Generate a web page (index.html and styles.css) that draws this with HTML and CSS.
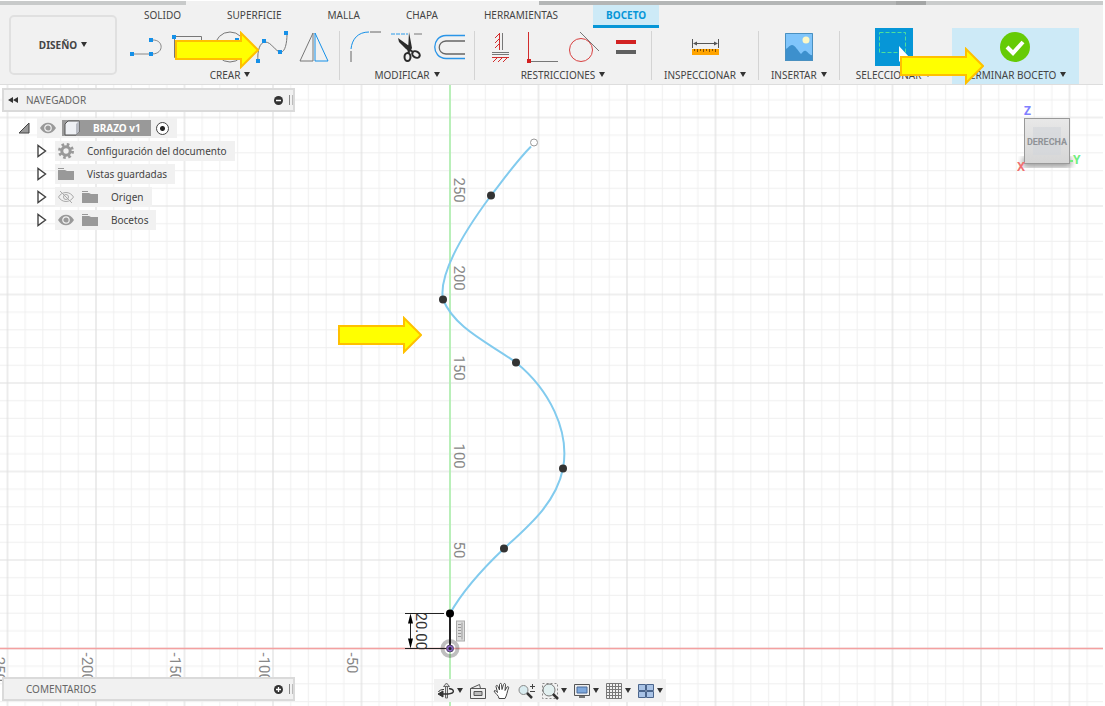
FILE: index.html
```html
<!DOCTYPE html>
<html lang="es">
<head>
    <meta charset="UTF-8">
    <meta name="viewport" content="width=device-width, initial-scale=1.0">
    <title>BRAZO v1</title>
    <link rel="stylesheet" href="styles.css">
</head>
<body>
    <div class="strip"><i class="strip-a"></i><i class="strip-b"></i><i class="strip-c"></i><i class="strip-d"></i><i class="strip-e"></i></div>

    <header class="ribbon">
        <button class="workspace caret">DISEÑO</button>

        <div class="ribbon-body">
            <nav class="tabs">
                <button class="tab">SOLIDO</button>
                <button class="tab">SUPERFICIE</button>
                <button class="tab">MALLA</button>
                <button class="tab">CHAPA</button>
                <button class="tab">HERRAMIENTAS</button>
                <button class="tab active">BOCETO</button>
            </nav>

            <div class="groups">
                <div class="group">
                    <div class="tools">
                        <button class="tool" aria-label="Línea">
                            <svg viewBox="0 0 34 34"><path d="M3 24h20c12 0 12-14 1-14" fill="none" stroke="#888"/><path d="M1 22h4v4h-4zM20 22h4v4h-4zM20 8h4v4h-4z" fill="#1590e8"/></svg>
                        </button>
                        <button class="tool" aria-label="Rectángulo">
                            <svg viewBox="0 0 34 34"><path d="M3.500 6.500h27v21h-27z" fill="none" stroke="#777"/><path d="M1 5h4v4h-4z" fill="#1590e8"/></svg>
                        </button>
                        <button class="tool" aria-label="Círculo">
                            <svg viewBox="0 0 34 34"><circle cx="17" cy="17" r="15" fill="none" stroke="#777"/><path d="M22 8h4v4h-4z" fill="#1590e8"/></svg>
                        </button>
                        <button class="tool" aria-label="Spline">
                            <svg viewBox="0 0 34 34"><path d="M3 31C2 21 5 12 10 12c7 0 10 10 16 10 4 0 6-9 6-18" fill="none" stroke="#777"/><path d="M1 29h4v4h-4zM7 9h4v4h-4zM23 20h4v4h-4zM29 1h4v4h-4z" fill="#1590e8"/></svg>
                        </button>
                        <button class="tool" aria-label="Simetría">
                            <svg viewBox="0 0 34 34" fill="none"><path d="M16 3v28H3z" stroke="#777"/><path d="M18 3v28h13z" stroke="#1590e8"/></svg>
                        </button>
                    </div>
                    <button class="group-label caret">CREAR</button>
                </div>

                <div class="group">
                    <div class="tools">
                        <button class="tool" aria-label="Empalme">
                            <svg viewBox="0 0 34 34" fill="none"><path d="M3 19C4 9 10 2 21 2" stroke="#1590e8"/><path d="M3 21v11M22 2h11" stroke="#666"/></svg>
                        </button>
                        <button class="tool" aria-label="Recortar">
                            <svg viewBox="0 0 34 34"><path d="M1 4h17" stroke="#2a9bea" stroke-dasharray="4 1"/><path d="M24 4h8" stroke="#777"/><path d="M19 2l3 16-4 3zM8 8l14 10-2 4-4-3-7-7z" fill="#2b2b2b"/><g fill="none" stroke="#2b2b2b" stroke-width="2"><ellipse cx="17.500" cy="27" rx="3" ry="4"/><ellipse cx="26" cy="24.500" rx="4" ry="3" transform="rotate(30 26 24.500)"/><path d="M18 18l1 5M20 20l3 2"/></g></svg>
                        </button>
                        <button class="tool" aria-label="Desfase">
                            <svg viewBox="0 0 34 34" fill="none"><path d="M33 5.500H14C-1 6-1 28 14 28.500h19" stroke="#2a95e8" stroke-width="1.300"/><path d="M33 11H14c-9 1-9 12 0 13h19" stroke="#666" stroke-width="1.300"/></svg>
                        </button>
                    </div>
                    <button class="group-label caret">MODIFICAR</button>
                </div>

                <div class="group">
                    <div class="tools">
                        <button class="tool" aria-label="Horizontal/Vertical">
                            <svg viewBox="0 0 34 34" fill="none"><path d="M19.500 3v17M9 22.500h17M9 24.500h17" stroke="#777"/><path d="M16.500 3v17M16 4l-4 4M16 9l-4 4M16 14l-4 4M9 27.500h17M14 28l-4 4M19 28l-4 4M24 28l-4 4" stroke="#d22c2c"/></svg>
                        </button>
                        <button class="tool" aria-label="Perpendicular">
                            <svg viewBox="0 0 34 34"><path d="M3.500 2v28" stroke="#d22c2c"/><path d="M6 31.500h27" stroke="#777"/><path d="M2 29h4v4h-4z" fill="#d22020"/></svg>
                        </button>
                        <button class="tool" aria-label="Tangente">
                            <svg viewBox="0 0 34 34" fill="none"><circle cx="14" cy="20" r="11.500" stroke="#d84040"/><path d="M13 2l19 19" stroke="#777"/></svg>
                        </button>
                        <button class="tool" aria-label="Igual">
                            <svg viewBox="0 0 34 34"><path d="M7 10h20v4H7z" fill="#d22222"/><path d="M7 20h20v4H7z" fill="#606060"/></svg>
                        </button>
                    </div>
                    <button class="group-label caret">RESTRICCIONES</button>
                </div>

                <div class="group">
                    <div class="tools">
                        <button class="tool" aria-label="Medir">
                            <svg viewBox="0 0 34 34"><path d="M4.500 9v9M30.500 9v9M6 13.500h23" stroke="#555"/><path d="M5 13.500l4-2v4zM30 13.500l-4-2v4z" fill="#555"/><path d="M4 19h27v6H4z" fill="#ffa400"/><path d="M6.500 19v2M9.500 19v3M12.500 19v2M15.500 19v3M18.500 19v2M21.500 19v3M24.500 19v2M27.500 19v3" stroke="#865000"/></svg>
                        </button>
                    </div>
                    <button class="group-label caret">INSPECCIONAR</button>
                </div>

                <div class="group">
                    <div class="tools">
                        <button class="tool" aria-label="Insertar imagen">
                            <svg viewBox="0 0 34 34"><path d="M3 3h28v28H3z" fill="#80c5fb"/><path d="M3 19c3 0 4-4 7-4s6 6 9 9c2-2 3-4 5-3s4 5 7 4v6H3z" fill="#3d90cd"/><circle cx="24" cy="10" r="3.500" fill="#fdf7c5"/><path d="M3.500 3.500h27v27h-27z" fill="none" stroke="#4a90c0"/></svg>
                        </button>
                    </div>
                    <button class="group-label caret">INSERTAR</button>
                </div>

                <div class="group last">
                    <div class="tools">
                        <button class="tool selected" aria-label="Seleccionar">
                            <svg viewBox="0 0 34 34"><path d="M2.500 2.500h26v20h-26z" fill="none" stroke="#4fe09a" stroke-dasharray="4 2"/><path d="M22 16v16l4-4h7z" fill="#fff"/></svg>
                        </button>
                    </div>
                    <button class="group-label caret">SELECCIONAR</button>
                </div>

                <div class="group finish">
                    <div class="tools">
                        <button class="tool" aria-label="Aceptar">
                            <svg viewBox="0 0 34 34"><circle cx="17" cy="17" r="15" fill="#66cb06"/><path d="M9 17l6 6 10-11" fill="none" stroke="#fff" stroke-width="4"/></svg>
                        </button>
                    </div>
                    <button class="group-label caret">TERMINAR BOCETO</button>
                </div>
            </div>
        </div>

        <svg class="arrow arrow-spline" viewBox="0 0 84 38"><path d="M1 10h65V2l17 17-17 17v-8H1z"/></svg>
        <svg class="arrow arrow-finish" viewBox="0 0 84 38"><path d="M1 10h65V2l17 17-17 17v-8H1z"/></svg>
    </header>

    <main class="canvas">
        <svg class="sketch">
            <defs>
                <pattern id="grid" width="88.500" height="88.500" patternUnits="userSpaceOnUse">
                    <path d="M17.700 0v88.500M35.400 0v88.500M53.100 0v88.500M70.800 0v88.500M0 17.700h88.500M0 35.400h88.500M0 53.100h88.500M0 70.800h88.500" stroke="#efefef"/>
                    <path d="M0 0v88.500M88.500 0v88.500M0 0h88.500M0 88.500h88.500" stroke="#e0e0e0" stroke-width="1.200"/>
                </pattern>
            </defs>
            <!-- everything is drawn relative to the sketch origin -->
            <g transform="translate(450 563.500)">
                <rect x="-2000" y="-2000" width="5000" height="4000" fill="url(#grid)"/>
                <path d="M-2000 0h5000" stroke="#f4a0a0" stroke-width="1.500"/>
                <path d="M0-2000v4000" stroke="#a8f0a8" stroke-width="1.500"/>

                <g class="ruler">
                    <text transform="translate(4 -471) rotate(90)">250</text>
                    <text transform="translate(4 -383) rotate(90)">200</text>
                    <text transform="translate(4 -293) rotate(90)">150</text>
                    <text transform="translate(4 -205) rotate(90)">100</text>
                    <text transform="translate(4 -107) rotate(90)">50</text>
                    <text transform="translate(-103 4) rotate(90)">-50</text>
                    <text transform="translate(-191 4) rotate(90)">-100</text>
                    <text transform="translate(-280 4) rotate(90)">-150</text>
                    <text transform="translate(-368 4) rotate(90)">-200</text>
                    <text transform="translate(-456 4) rotate(90)">-250</text>
                </g>

                <path class="spline" d="M0-35C14-60 34-81 54-100C78-122 106-145 113-180C120-218 99-259 66-286C38-306 5-320-7-349C-12-376 18-422 41-453C55-471 67-488 81-502"/>
                <g fill="#333">
                    <circle cx="54" cy="-100" r="4"/>
                    <circle cx="113" cy="-180" r="4"/>
                    <circle cx="66" cy="-286" r="4"/>
                    <circle cx="-7" cy="-349" r="4"/>
                    <circle cx="41" cy="-453" r="4"/>
                </g>
                <circle cx="84" cy="-506" r="3.500" fill="#fff" stroke="#999"/>

                <circle r="7.500" fill="none" stroke="#000" stroke-opacity=".25" stroke-width="4"/>
                <path d="M0-35V0" stroke="#222" stroke-width="2"/>
                <circle cy="-35" r="4"/>
                <circle r="3.500" fill="#8a63c4" stroke="#53456a"/>
                <circle r="1.500" fill="#222"/>
                <path d="M-45-35h39M-45 0h41M-39.500-30v25" stroke="#222"/>
                <path d="M-39.500-35l-2.500 10h5zM-39.500 0l-2.500-10h5z"/>
                <text class="dimension" transform="translate(-34 -36) rotate(90)">20.00</text>
                <rect x="6.500" y="-27.500" width="8" height="20" fill="#ddd" stroke="#aaa"/>
                <path d="M12-26v17M8-24h3M8-21h3M8-18h3M8-15h3M8-12h3" stroke="#999"/>
            </g>
        </svg>

        <svg class="arrow arrow-curve" viewBox="0 0 84 38"><path d="M1 10h65V2l17 17-17 17v-8H1z"/></svg>

        <aside class="browser">
            <div class="panel">
                <svg class="rewind" viewBox="0 0 10 6"><path d="M5 0v6L0 3zM10 0v6L5 3z" fill="#333"/></svg>
                <span class="panel-title">NAVEGADOR</span>
                <button class="panel-toggle" aria-label="Contraer"><svg viewBox="0 0 9 9"><circle cx="4.500" cy="4.500" r="4.500" fill="#333"/><path d="M2 4.500h5" stroke="#fff" stroke-width="1.500"/></svg></button>
                <i class="grip"></i>
            </div>

            <ul class="tree">
                <li class="root">
                    <svg class="expander" viewBox="0 0 12 12"><path d="M11 1v10H1z" fill="#999" stroke="#444"/></svg>
                    <div class="node">
                        <svg class="icon" viewBox="0 0 16 16"><path d="M0 8c4-7 12-7 16 0-4 7-12 7-16 0z" fill="#999"/><circle cx="8" cy="8" r="3.200" fill="none" stroke="#f1f1f1" stroke-width="1.200"/></svg>
                        <span class="root-name">
                            <svg class="icon" viewBox="0 0 16 16"><path d="M1 4l3-3h11v11l-3 3H1z" fill="#eef0f4" stroke="#555"/><path d="M12 4l3-3v11l-3 3z" fill="#b9bcc4"/></svg>
                            BRAZO v1
                        </span>
                        <input type="radio" name="component" class="activate" aria-label="Activar componente" checked>
                    </div>
                </li>
                <li>
                    <svg class="expander" viewBox="0 0 12 14"><path d="M2 1.500v11L9.500 7z" fill="#fff" stroke="#444" stroke-width="1.400"/></svg>
                    <div class="node">
                        <svg class="icon" viewBox="0 0 16 16"><circle cx="8" cy="8" r="4.200" fill="none" stroke="#999" stroke-width="3"/><circle cx="8" cy="8" r="6.500" fill="none" stroke="#999" stroke-width="3" stroke-dasharray="2.550 2.550"/></svg>
                        <span>Configuración del documento</span>
                    </div>
                </li>
                <li>
                    <svg class="expander" viewBox="0 0 12 14"><path d="M2 1.500v11L9.500 7z" fill="#fff" stroke="#444" stroke-width="1.400"/></svg>
                    <div class="node">
                        <svg class="icon" viewBox="0 0 16 16"><path d="M0 4h7l2 1h7v9H0zM0 2h6v1H0z" fill="#999"/></svg>
                        <span>Vistas guardadas</span>
                    </div>
                </li>
                <li>
                    <svg class="expander" viewBox="0 0 12 14"><path d="M2 1.500v11L9.500 7z" fill="#fff" stroke="#444" stroke-width="1.400"/></svg>
                    <div class="node">
                        <svg class="icon" viewBox="0 0 16 16" fill="none" stroke="#aaa"><path d="M.500 8C4 2 12 2 15.500 8 12 14 4 14 .500 8zM2 2l12 12"/><circle cx="8" cy="8" r="2.500"/></svg>
                        <svg class="icon" viewBox="0 0 16 16"><path d="M0 4h7l2 1h7v9H0zM0 2h6v1H0z" fill="#999"/></svg>
                        <span>Origen</span>
                    </div>
                </li>
                <li>
                    <svg class="expander" viewBox="0 0 12 14"><path d="M2 1.500v11L9.500 7z" fill="#fff" stroke="#444" stroke-width="1.400"/></svg>
                    <div class="node">
                        <svg class="icon" viewBox="0 0 16 16"><path d="M0 8c4-7 12-7 16 0-4 7-12 7-16 0z" fill="#999"/><circle cx="8" cy="8" r="3.200" fill="none" stroke="#f1f1f1" stroke-width="1.200"/></svg>
                        <svg class="icon" viewBox="0 0 16 16"><path d="M0 4h7l2 1h7v9H0zM0 2h6v1H0z" fill="#999"/></svg>
                        <span>Bocetos</span>
                    </div>
                </li>
            </ul>
        </aside>

        <svg class="viewcube" viewBox="0 0 70 76">
            <defs>
                <linearGradient id="face" x1="0" y1="0" x2="0" y2="1">
                    <stop offset="0" stop-color="#e8e8e8"/>
                    <stop offset="1" stop-color="#d6d6d6"/>
                </linearGradient>
                <filter id="soft"><feGaussianBlur stdDeviation="3"/></filter>
            </defs>
            <rect x="10" y="56" width="48" height="10" fill="#999" filter="url(#soft)"/>
            <rect x="11.500" y="17.500" width="45" height="45" fill="url(#face)" stroke="#999"/>
            <rect x="20" y="26" width="28" height="28" fill="#d2d6da" opacity=".6"/>
            <text class="cube-face" x="34" y="44">DERECHA</text>
            <text class="cube-axis" x="11" y="14" fill="#8080ff">Z</text>
            <text class="cube-axis" x="4" y="70" fill="#f07070">X</text>
            <text class="cube-axis" x="60" y="63" fill="#70ee80">Y</text>
            <path d="M57 60h3" stroke="#70ee80" stroke-width="2"/>
        </svg>

        <div class="panel comments">
            <span class="panel-title">COMENTARIOS</span>
            <button class="panel-toggle" aria-label="Expandir"><svg viewBox="0 0 9 9"><circle cx="4.500" cy="4.500" r="4.500" fill="#333"/><path d="M2 4.500h5M4.500 2v5" stroke="#fff" stroke-width="1.300"/></svg></button>
            <i class="grip"></i>
        </div>

        <div class="viewbar-wrap">
            <div class="viewbar">
                <button class="view caret" aria-label="Órbita"><svg viewBox="0 0 18 18" fill="none" stroke="#333"><path d="M8.500 4h2v12h-2z" fill="#ddd" stroke="#666"/><path d="M6.500 4.500l3-3.500 3 3.500z" fill="#ddd" stroke="#666"/><path d="M12 6.500c6 1 6 5-1 5.500H4" stroke-width="1.400"/><path d="M7 7.500c-3 0-5 1-5.500 2.500"/><path d="M6 9l-5 3 5 3z" fill="#333"/></svg></button>
                <button class="view" aria-label="Mirar a"><svg viewBox="0 0 18 18" fill="#eee" stroke="#555"><path d="M1.500 6.500l9-4 1 4h5v10h-15zM1.500 6.500h13"/><path d="M5 9.500h8v4H5z" fill="#bbb"/></svg></button>
                <button class="view" aria-label="Encuadre"><svg viewBox="0 0 18 18" fill="#fff" stroke="#444"><path d="M6 16.500c0-3-4-5-5-7.500 1-1 2 0 3.500 1.500L3 4.500c0-1.500 1.500-1.500 2 0L6.500 8 6.500 2.500c.500-1.500 2-1.500 2 0L9 7.500l1.500-5c.500-1.500 2-1 2 0L12 8.500l2-3.500c1-1 2 0 1.500 1-1.500 4-1.500 7-3.500 10.500z"/></svg></button>
                <button class="view" aria-label="Zoom"><svg viewBox="0 0 18 18"><circle cx="6.500" cy="8" r="4.500" fill="#d9ecf0" stroke="#888"/><path d="M10 11l5 5" stroke="#333" stroke-width="2.500"/><path d="M13 4.500h5M15.500 2v5M13 9.500h5" stroke="#444"/></svg></button>
                <button class="view caret" aria-label="Ventana de zoom"><svg viewBox="0 0 18 18"><path d="M1.500 1.500h15v15h-15z" fill="none" stroke="#888" stroke-dasharray="2 2"/><circle cx="8" cy="8" r="6" fill="#e2f0f0" stroke="#777"/><path d="M12 12l5 5" stroke="#333" stroke-width="2.500"/></svg></button>
                <button class="view caret" aria-label="Visualización"><svg viewBox="0 0 18 18"><path d="M1.500 2.500h15v11h-15z" fill="#eee" stroke="#555"/><path d="M4 5h10v6H4z" fill="#7ea8dc" stroke="#4a6d9c"/><path d="M6 14h6v2H6z" fill="#777"/></svg></button>
                <button class="view caret" aria-label="Rejilla"><svg viewBox="0 0 18 18" fill="none" stroke="#777"><path d="M1.500 1.500h15v15h-15zM4.500 1v16M7.500 1v16M10.500 1v16M13.500 1v16M1 4.500h16M1 7.500h16M1 10.500h16M1 13.500h16"/></svg></button>
                <button class="view caret" aria-label="Ventanas gráficas"><svg viewBox="0 0 18 18" fill="#a9c3e6" stroke="#4b658c"><path d="M1.500 2.500h7v6h-7zM9.500 2.500h7v6h-7zM1.500 9.500h7v6h-7zM9.500 9.500h7v6h-7z"/></svg></button>
            </div>
        </div>
    </main>
</body>
</html>
```
FILE: styles.css
```css
* {
    margin: 0;
    padding: 0;
    box-sizing: border-box;
}

body {
    display: flex;
    flex-direction: column;
    height: 100vh;
    padding: 1px 2px 0 0;
    background-color: #fff;
    font-family: 'Noto Sans', sans-serif;
    font-size: 10px;
    line-height: 14px;
    color: #444;
    overflow: hidden;
}

button {
    font: inherit;
    color: inherit;
    background: none;
    border: none;
    cursor: pointer;
    white-space: nowrap;
}

svg {
    display: block;
}

/* small drop-down triangle after a label */
.caret::after {
    content: '';
    display: inline-block;
    margin-left: 4px;
    vertical-align: 2px;
    border: 3px solid transparent;
    border-top: 5px solid #333;
    border-bottom: none;
}

/* window edge above the ribbon */
.strip {
    display: flex;
    height: 4px;
}

.strip-a { flex: 186; background-color: #c8caca; }
.strip-b { flex: 353; background-color: #f1f1f1; }
.strip-c { flex: 357; background-color: #b4b6b6; }
.strip-d { flex: 30; background-color: #a4a6a6; }
.strip-e { flex: 177; background-color: #cacccc; }

/* ribbon */
.ribbon {
    position: relative;
    display: flex;
    background-color: #f1f1f1;
    height: 79px;
}

.workspace {
    width: 108px;
    height: 60px;
    margin: 10px 4px 0 9px;
    border: 2px solid #e0e0e0;
    border-radius: 5px;
    font-weight: bold;
    flex-shrink: 0;
}

.ribbon-body {
    flex: 1;
    display: flex;
    flex-direction: column;
}

.tabs {
    display: flex;
    gap: 24px;
    padding-left: 12px;
    height: 23px;
}

.tab {
    padding: 0 11px;
    border-bottom: 3px solid transparent;
}

.tab.active {
    padding: 0 13px;
    background-color: #cdeaf7;
    border-bottom-color: #0696d7;
    color: #0696d7;
    font-weight: bold;
}

.groups {
    display: flex;
    flex: 1;
}

.group {
    position: relative;
    display: flex;
    flex-direction: column;
    align-items: center;
    padding: 2px 8px 0;
    border-right: 1px solid transparent;
}

.group::after {
    content: '';
    position: absolute;
    top: 3px;
    bottom: 4px;
    right: -1px;
    width: 1px;
    background-color: #d4d4d4;
}

.group.last::after,
.group.finish::after {
    display: none;
}

.tools {
    display: flex;
    gap: 8px;
    height: 34px;
}

.tool {
    width: 34px;
    height: 34px;
}

.tool.selected {
    background-color: #0696d7;
    outline: 2px solid #0696d7;
}

.group-label {
    margin-top: 4px;
    padding: 0 4px;
}

.last {
    padding: 2px 12px 0;
}

.finish {
    background-color: #cdeaf7;
    margin-left: 4px;
}

/* callout arrows */
.arrow {
    position: absolute;
    width: 84px;
    height: 38px;
    fill: #ff0;
    stroke: #ffc000;
    stroke-width: 2;
    pointer-events: none;
}

.arrow-spline { left: 175px; top: 26px; }
.arrow-finish { left: 900px; top: 42px; z-index: 2; }
.arrow-curve { left: 338px; top: 231px; }

/* drawing area */
.canvas {
    position: relative;
    flex: 1;
    border-top: 1px solid #ddd;
    overflow: hidden;
}

.sketch {
    position: absolute;
    width: 100%;
    height: 100%;
}

.ruler,
.dimension {
    font-family: Roboto, sans-serif;
    font-size: 15px;
}

.ruler {
    fill: #888;
}

.dimension {
    fill: #333;
}

.spline {
    fill: none;
    stroke: #82cbee;
    stroke-width: 2;
}

/* browser */
.browser {
    position: absolute;
    left: 2px;
    top: 3px;
}

.panel {
    display: flex;
    align-items: center;
    width: 293px;
    height: 24px;
    padding: 0 0 0 4px;
    background-color: #f1f1f1;
    border: 2px solid #dadada;
    color: #666;
}

.rewind {
    width: 10px;
    height: 6px;
    margin-right: 8px;
}

.panel-title {
    flex: 1;
}

.panel-toggle svg {
    width: 9px;
    height: 9px;
}

.grip {
    width: 4px;
    height: 10px;
    margin-left: 6px;
    border-left: 1px solid #888;
    border-right: 1px solid #bbb;
}

.tree {
    display: flex;
    flex-direction: column;
    gap: 3px;
    margin-top: 6px;
    padding-left: 34px;
    list-style: none;
}

.tree li {
    display: flex;
    align-items: center;
    gap: 7px;
}

.tree .root {
    margin-left: -18px;
}

.expander {
    width: 12px;
    height: 14px;
}

.node {
    display: flex;
    align-items: center;
    gap: 8px;
    height: 20px;
    padding: 0 8px 0 3px;
    background-color: #f1f1f1;
}

.node span {
    margin-left: 5px;
}

.icon {
    width: 16px;
    height: 16px;
}

.root .node {
    gap: 5px;
}

.node .root-name {
    display: flex;
    align-items: center;
    gap: 13px;
    height: 16px;
    margin-left: 1px;
    padding: 0 10px 0 2px;
    background-color: #999;
    color: #fff;
    font-weight: bold;
}

.activate {
    appearance: none;
    width: 13px;
    height: 13px;
    border: 1px solid #444;
    border-radius: 50%;
    background: radial-gradient(circle, #222 2px, #fff 3px);
}

/* view cube */
.viewcube {
    position: absolute;
    right: 20px;
    top: 16px;
    width: 70px;
    height: 76px;
}

.cube-face {
    font-family: Roboto, sans-serif;
    font-size: 9px;
    font-weight: bold;
    fill: #8f9296;
    text-anchor: middle;
}

.cube-axis {
    font-size: 12px;
    font-weight: bold;
}

/* bottom panels */
.comments {
    position: absolute;
    left: 2px;
    bottom: 5px;
    padding-left: 22px;
}

.viewbar-wrap {
    position: absolute;
    left: 0;
    right: 4px;
    bottom: 4px;
    display: flex;
    justify-content: center;
    pointer-events: none;
}

.viewbar {
    display: flex;
    align-items: center;
    gap: 6px;
    height: 23px;
    padding: 0 3px;
    background-color: #f1f1f1;
    pointer-events: auto;
}

.view {
    display: flex;
    align-items: center;
}

.view svg {
    width: 18px;
    height: 18px;
}

.view.caret::after {
    margin-left: 2px;
}
```
